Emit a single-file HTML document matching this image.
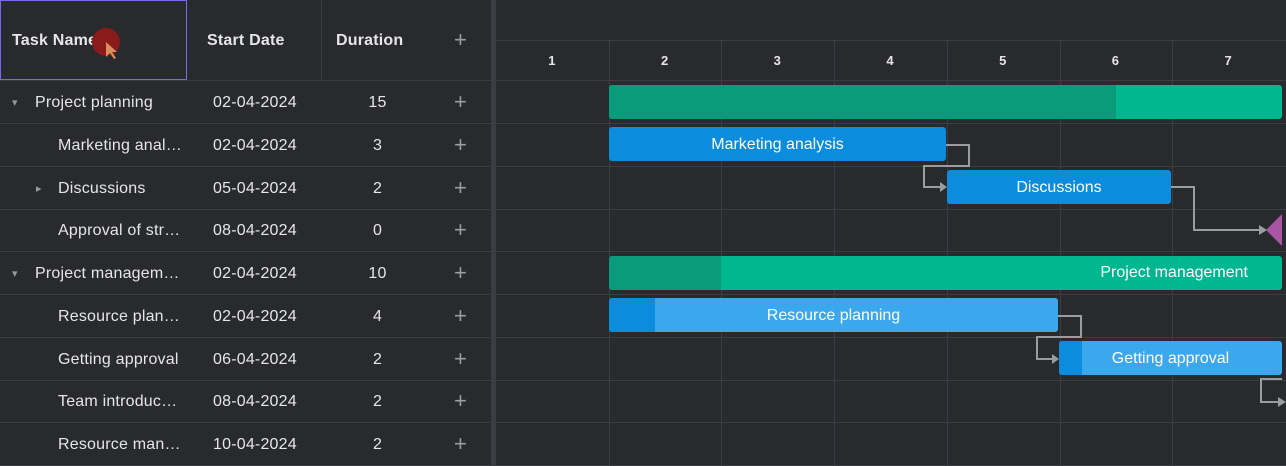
<!DOCTYPE html>
<html><head><style>
body{margin:0;width:1286px;height:466px;background:#292a2d;font-family:"Liberation Sans",sans-serif;color:#e6e6e6;overflow:hidden;position:relative}
.a{position:absolute}
.hl{position:absolute;height:1px;background:#3a3d42}
.vl{position:absolute;width:1px;background:#3a3d42}
.t{position:absolute;font-size:16px;line-height:20px;white-space:nowrap;letter-spacing:0.2px}
.b{font-weight:bold}
.plus{position:absolute;font-size:22px;color:#9a9ca0;line-height:20px}
.bar{position:absolute;border-radius:3px;color:#fff;font-size:16px;display:flex;align-items:center;justify-content:center;overflow:hidden;padding-top:2px;box-sizing:border-box}
</style></head><body>
<div class="a" style="left:0;top:0;width:185px;height:78px;border:1px solid #7b68ee"></div>
<div class="vl" style="left:321px;top:0;height:80px"></div>
<div class="hl" style="left:0;top:80px;width:491px"></div>
<div class="t b" style="left:12px;top:31px">Task Name</div>
<div class="a" style="left:92px;top:28px;width:28px;height:28px;border-radius:50%;background:#8b1a1a"></div>
<div class="t b" style="left:207px;top:31px">Start Date</div>
<div class="t b" style="left:336px;top:31px">Duration</div>
<div class="plus" style="left:454px;top:30px">+</div>
<div class="a" style="left:491px;top:0;width:5px;height:466px;background:#3a3d42"></div>
<div class="hl" style="left:496px;top:40px;width:790px"></div>
<div class="hl" style="left:496px;top:80px;width:790px"></div>
<div id="rows"></div>
<script>
var rows=[["▾","Project planning","02-04-2024","15",0],["","Marketing anal…","02-04-2024","3",1],["▸","Discussions","05-04-2024","2",1],["","Approval of str…","08-04-2024","0",1],["▾","Project managem…","02-04-2024","10",0],["","Resource plan…","02-04-2024","4",1],["","Getting approval","06-04-2024","2",1],["","Team introduc…","08-04-2024","2",1],["","Resource man…","10-04-2024","2",1]];
var h="";
for(var i=0;i<rows.length;i++){var y=81+i*42.75;var r=rows[i];
h+='<div class="hl" style="left:0;top:'+(y+42)+'px;width:1286px"></div>';
if(r[0])h+='<div class="t" style="left:'+(r[4]?36:12)+'px;top:'+(y+12)+'px;font-size:11px;color:#999">'+r[0]+'</div>';
h+='<div class="t" style="left:'+(r[4]?58:35)+'px;top:'+(y+12)+'px">'+r[1]+'</div>';
h+='<div class="t" style="left:213px;top:'+(y+12)+'px">'+r[2]+'</div>';
h+='<div class="t" style="left:340px;width:75px;text-align:center;top:'+(y+12)+'px">'+r[3]+'</div>';
h+='<div class="plus" style="left:454px;top:'+(y+11)+'px">+</div>';}
for(var c=0;c<7;c++){var x=496+c*112.7;
if(c>0)h+='<div class="vl" style="left:'+Math.round(x)+'px;top:40px;height:426px"></div>';
h+='<div class="t b" style="left:'+(x)+'px;width:112px;text-align:center;top:51px;font-size:13px">'+(c+1)+'</div>';}
document.getElementById('rows').innerHTML=h;
</script>
<div class="bar" style="left:609px;top:85px;width:673px;height:34px;background:#00b78f;justify-content:flex-start;padding:0"><div style="width:507px;height:100%;background:#0a9b7b"></div></div>
<div class="bar" style="left:609px;top:127px;width:337px;height:34px;background:#0b8cdc">Marketing analysis</div>
<div class="bar" style="left:947px;top:170px;width:224px;height:34px;background:#0b8cdc">Discussions</div>
<div class="bar" style="left:609px;top:256px;width:673px;height:34px;background:#00b78f"><div class="a" style="left:0;top:0;width:112px;height:34px;background:#0a9b7b"></div><span class="a" style="right:34px;top:8px">Project management</span></div>
<div class="bar" style="left:609px;top:298px;width:449px;height:34px;background:#3ba7ec"><div class="a" style="left:0;top:0;width:46px;height:34px;background:#0b8cdc"></div><span style="position:relative">Resource planning</span></div>
<div class="bar" style="left:1059px;top:341px;width:223px;height:34px;background:#3ba7ec"><div class="a" style="left:0;top:0;width:23px;height:34px;background:#0b8cdc"></div><span style="position:relative">Getting approval</span></div>
<svg class="a" style="left:0;top:0" width="1286" height="466">
<g fill="none" stroke="#9a9ca0" stroke-width="2">
<polyline points="946,145 969,145 969,166 924,166 924,187 940,187"/>
<polyline points="1171,187 1194,187 1194,230 1260,230"/>
<polyline points="1058,316 1081,316 1081,337 1037,337 1037,359 1052,359"/>
<polyline points="1282,379 1261,379 1261,402 1278,402"/>
</g>
<g fill="#9a9ca0"><polygon points="940,182 947,187 940,192"/><polygon points="1259,225 1267,230 1259,235"/><polygon points="1052,354 1059,359 1052,364"/><polygon points="1278,397 1286,402 1278,407"/></g>
<polygon points="1282,214 1266,230 1282,246" fill="#a855a5"/>
<path d="M106 42 L106 57 L110 53 L114 59 L116 58 L112 52 L117 52 Z" fill="#d89060"/>
</svg>
</body></html>
